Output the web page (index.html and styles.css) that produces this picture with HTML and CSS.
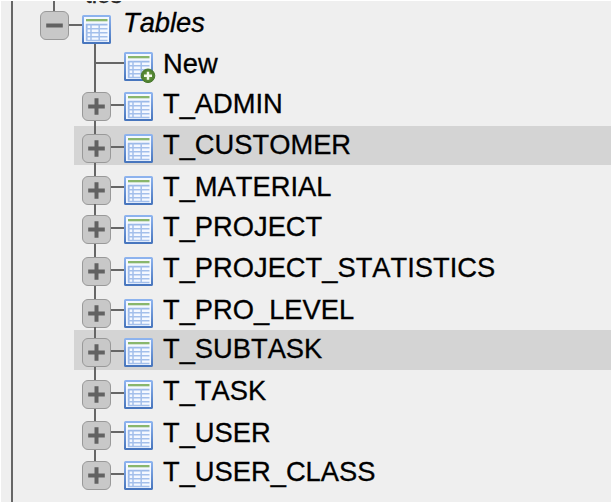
FILE: index.html
```
<!DOCTYPE html>
<html lang="en">
<head>
<meta charset="utf-8">
<title>Tables</title>
<link rel="stylesheet" href="styles.css">
</head>
<body>
<svg class="defs" aria-hidden="true">
  <defs>
    <linearGradient id="frame" x1="0" y1="0" x2="0" y2="1"><stop offset="0" stop-color="#8db3ee"/><stop offset="1" stop-color="#4775bd"/></linearGradient>
    <radialGradient id="badge"><stop offset="0" stop-color="#72a245"/><stop offset="1" stop-color="#4a7c2c"/></radialGradient>
    <symbol id="table" viewBox="0 0 32 29">
      <rect x="1" y="1" width="27" height="27" rx=".6" fill="#f4f8ff" stroke="url(#frame)" stroke-width="2"/>
      <rect x="4" y="4" width="21.5" height="2.3" fill="#89b66c"/>
      <path d="M4 9.6H25.5M4.7 26V9" fill="none" stroke="#9bb9e8" stroke-width="1.8"/>
      <path d="M9 9V26M17.2 9V26M4 13.8H25.5M4 17.8H25.5M4 21.8H25.5M4 25.4H25.5" stroke="#a3bfeb" stroke-width="1.5"/>
    </symbol>
    <symbol id="plus" viewBox="0 0 29 29"><path d="M14.5 6.2V22.8M6.2 14.5H22.8" stroke="#626262" stroke-width="4"/></symbol>
    <symbol id="minus" viewBox="0 0 29 29"><path d="M6.2 14.5H22.8" stroke="#626262" stroke-width="4"/></symbol>
  </defs>
</svg>
<main class="panel">
  <span class="cut">tles</span>
  <div class="root">
    <span class="box"><svg><use href="#minus"/></svg></span><i class="dash"></i><svg class="icon"><use href="#table"/></svg><em>Tables</em>
  </div>
  <ul class="tree">
    <li class="new up"><i class="dash"></i><svg class="icon"><use href="#table"/><circle cx="24" cy="23.8" r="6.8" fill="url(#badge)" stroke="#4a7a2f"/><path d="M24 19.8v8M20 23.8h8" stroke="#f5faef" stroke-width="2.4"/></svg><span>New</span></li>
    <li><span class="box"><svg><use href="#plus"/></svg></span><i class="dash"></i><svg class="icon"><use href="#table"/></svg><span>T_ADMIN</span></li>
    <li class="on"><span class="box"><svg><use href="#plus"/></svg></span><i class="dash"></i><svg class="icon"><use href="#table"/></svg><span>T_CUSTOMER</span></li>
    <li class="up"><span class="box"><svg><use href="#plus"/></svg></span><i class="dash"></i><svg class="icon"><use href="#table"/></svg><span>T_MATERIAL</span></li>
    <li><span class="box"><svg><use href="#plus"/></svg></span><i class="dash"></i><svg class="icon"><use href="#table"/></svg><span>T_PROJECT</span></li>
    <li><span class="box"><svg><use href="#plus"/></svg></span><i class="dash"></i><svg class="icon"><use href="#table"/></svg><span>T_PROJECT_STATISTICS</span></li>
    <li class="up"><span class="box"><svg><use href="#plus"/></svg></span><i class="dash"></i><svg class="icon"><use href="#table"/></svg><span>T_PRO_LEVEL</span></li>
    <li class="on"><span class="box"><svg><use href="#plus"/></svg></span><i class="dash"></i><svg class="icon"><use href="#table"/></svg><span>T_SUBTASK</span></li>
    <li><span class="box"><svg><use href="#plus"/></svg></span><i class="dash"></i><svg class="icon"><use href="#table"/></svg><span>T_TASK</span></li>
    <li class="up"><span class="box"><svg><use href="#plus"/></svg></span><i class="dash"></i><svg class="icon"><use href="#table"/></svg><span>T_USER</span></li>
    <li class="last"><span class="box"><svg><use href="#plus"/></svg></span><i class="dash"></i><svg class="icon"><use href="#table"/></svg><span>T_USER_CLASS</span></li>
  </ul>
</main>
</body>
</html>
```
FILE: styles.css
```
* { box-sizing: border-box; }
body { margin: 0; background: #fff; overflow: hidden; }
.defs { position: absolute; width: 0; height: 0; }
.panel {
  position: relative;
  margin: 1px 0 1px 1px;
  height: 501px;
  overflow: hidden;
  background: #efefef;
  color: #000;
  font: 27.3px/32px "Liberation Sans", Arial, sans-serif;
  font-kerning: none;
  -webkit-text-stroke: .3px #000;
}
/* trunk line of the enclosing level */
.panel::before { content: ""; position: absolute; left: 10px; top: 0; bottom: 0; width: 2px; background: #666; }
.cut { position: absolute; left: 84px; top: -22px; font-size: 24px; line-height: 32px; color: #333; }
.root { position: relative; display: flex; height: 43.3px; padding: 10px 0 0 39px; }
.root::before { content: ""; position: absolute; left: 52px; top: 0; width: 2px; height: 11px; background: #666; }
.root .icon { margin-top: 4px; }
.root .dash { margin-top: 13px; width: 13px; }
.root em { margin: -4px 0 0 9px; }
.box { width: 29px; height: 29px; border: 1.5px solid #999; border-radius: 6px; background: #c8c8c8; position: relative; flex: none; }
.box svg { display: block; width: 29px; height: 29px; margin: -1px; }
.icon { display: block; width: 32px; height: 29px; flex: none; overflow: visible; }
.icon use { width: 32px; height: 29px; }
.dash { width: 13px; height: 2px; margin-top: 12px; background: #666; flex: none; }
.tree { list-style: none; margin: 0 0 0 73px; padding: 0; }
.tree li { position: relative; display: flex; height: 39.5px; margin-bottom: 2.2px; padding: 8px 0 0 8px; }
.tree li::before { content: ""; position: absolute; left: 20px; top: -3px; height: 43px; width: 2px; background: #666; }
.tree li.new::before { top: 0; }
.tree li.last::before { height: 12px; }
.tree li > span:last-child { margin: -4.6px 0 0 7px; white-space: nowrap; }
.tree .up { margin-bottom: 0; }
.tree .up .dash { margin-top: 10px; }
.tree .new { height: 40px; }
.tree .new .dash { margin-left: 13px; width: 29px; }
.tree .on { background: #d4d4d4; }
```
